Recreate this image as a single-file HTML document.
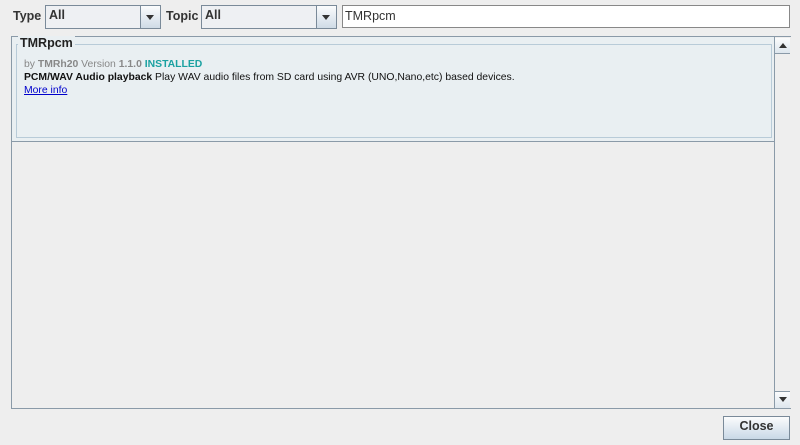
<!DOCTYPE html>
<html><head><style>
body{margin:0;width:800px;height:445px;background:#eeeeee;font-family:"Liberation Sans",sans-serif;font-size:12px;position:relative;overflow:hidden}
.a{position:absolute}
.lbl{font-weight:bold;font-size:12.5px;color:#333}
.combo{border:1px solid #7a8a99;background:#eef0f3;box-sizing:border-box;height:24px}
.combo span{position:absolute;left:3px;top:2px;font-weight:bold;font-size:12.5px;color:#333}
.arr{position:absolute;right:0;top:0;width:19px;height:22px;border-left:1px solid #7a8a99;background:linear-gradient(#fbfcfd,#cfdbe6)}
.arr:after{content:"";position:absolute;left:5px;top:9px;border-left:4px solid transparent;border-right:4px solid transparent;border-top:5px solid #333}
</style></head><body>
<div class="a lbl" style="left:13px;top:9px">Type</div>
<div class="a combo" style="left:45px;top:5px;width:116px"><span>All</span><div class="arr"></div></div>
<div class="a lbl" style="left:166px;top:9px">Topic</div>
<div class="a combo" style="left:201px;top:5px;width:136px"><span>All</span><div class="arr"></div></div>
<div class="a" style="left:342px;top:5px;width:448px;height:23px;box-sizing:border-box;border:1px solid #888;background:#fff;font-size:12.5px;color:#333;padding:3px 0 0 2px">TMRpcm</div>
<div class="a" style="left:11px;top:36px;width:780px;height:373px;box-sizing:border-box;border:1px solid #8a9aa8;background:#eeeeee"></div>
<div class="a" style="left:12px;top:37px;width:762px;height:104px;background:#e9eff2;border-bottom:1px solid #8a9aa8"></div>
<div class="a" style="left:16px;top:44px;width:756px;height:94px;box-sizing:border-box;border:1px solid #b8cbd8"></div>
<div class="a" style="left:18px;top:36px;background:#e9eff2;padding:0 2px;font-weight:bold;font-size:12.5px;color:#222">TMRpcm</div>
<div class="a" style="left:24px;top:59px;font-size:10.4px;color:#888">by <b>TMRh20</b> Version <b>1.1.0</b> <b style="color:#1aa1a1">INSTALLED</b></div>
<div class="a" style="left:24px;top:72px;font-size:10.4px;color:#111"><b>PCM/WAV Audio playback</b> Play WAV audio files from SD card using AVR (UNO,Nano,etc) based devices.</div>
<div class="a" style="left:24px;top:85px;font-size:10.4px;color:#00c;text-decoration:underline">More info</div>
<div class="a" style="left:774px;top:37px;width:16px;height:371px;border-left:1px solid #8a9aa8;background:#eeeeee"></div>
<div class="a" style="left:775px;top:38px;width:15px;height:15px;border-bottom:1px solid #8a9aa8;background:linear-gradient(#fbfcfd,#dde6ee)"></div>
<div class="a" style="left:779px;top:43px;border-left:4px solid transparent;border-right:4px solid transparent;border-bottom:5px solid #333"></div>
<div class="a" style="left:775px;top:391px;width:15px;height:16px;border-top:1px solid #8a9aa8;background:linear-gradient(#fbfcfd,#dde6ee)"></div>
<div class="a" style="left:779px;top:397px;border-left:4px solid transparent;border-right:4px solid transparent;border-top:5px solid #333"></div>
<div class="a" style="left:723px;top:416px;width:67px;height:24px;box-sizing:border-box;border:1px solid #7a8a99;background:linear-gradient(#fbfcfd,#c9d8e6);text-align:center;font-weight:bold;font-size:12.5px;color:#333;line-height:19px">Close</div>
</body></html>
